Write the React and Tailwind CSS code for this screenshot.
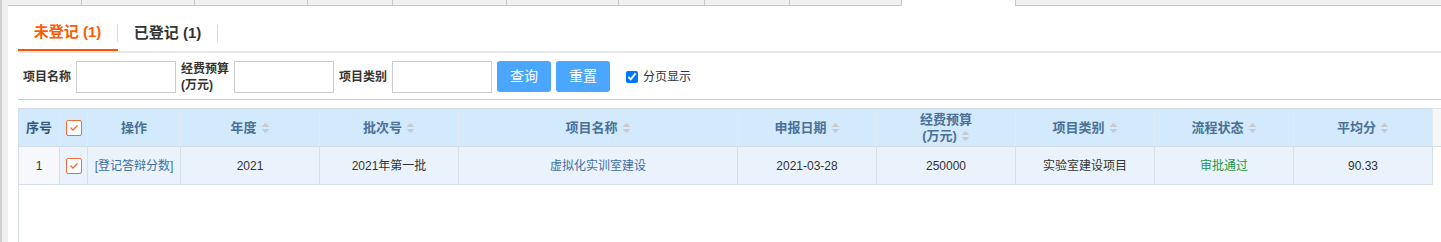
import React from "react";

const FONT = { fontFamily: '"Liberation Sans", "Noto Sans CJK SC", sans-serif' };

function Sort() {
  return (
    <svg width="9" height="12" viewBox="0 0 9 12" className="ml-[4px] shrink-0">
      <path d="M0.5 5 L4.5 1 L8.5 5 Z" fill="#c6cbd1" />
      <path d="M0.5 7 L4.5 11 L8.5 7 Z" fill="#c6cbd1" />
    </svg>
  );
}

function OrangeCheck() {
  return (
    <div className="w-[16px] h-[16px] border border-[#f26a3c] rounded-[2px] bg-white flex items-center justify-center">
      <svg width="10" height="8" viewBox="0 0 10 8">
        <path d="M1.5 3.5 L4 6 L8.5 1.5" fill="none" stroke="#f26a3c" strokeWidth="1.4" />
      </svg>
    </div>
  );
}

const cols = "grid-cols-[41px_28px_93px_139px_139px_279px_139px_139px_139px_139px_139px_133px_1fr]";

export default function App() {
  const topCells = [74, 113, 113, 85, 114, 112, 86, 85, 112];
  const head = [
    { t: "年度" },
    { t: "批次号" },
    { t: "项目名称" },
    { t: "申报日期" },
    { t: "经费预算", two: true },
    { t: "项目类别" },
    { t: "流程状态" },
    { t: "平均分" },
  ];
  return (
    <div className="flex w-[1441px] h-[242px] bg-white overflow-hidden text-[#333]" style={FONT}>
      <div className="w-[8px] h-full bg-[#f0f0f0] border-l-2 border-[#cfcfcf] shrink-0" />
      <div className="flex-1 flex flex-col min-w-0">
        {/* top tab strip */}
        <div className="flex h-[6px] shrink-0">
          {topCells.map((w, i) => (
            <div key={i} style={{ width: w }} className="h-full bg-[#f0f0f0] border-r border-b border-[#c8c8c8] shrink-0" />
          ))}
          <div className="w-[113px] h-full shrink-0" />
          <div className="flex-1 h-full bg-[#f0f0f0] border-l border-b border-[#c8c8c8]" />
        </div>

        <div className="pl-[10px] flex flex-col">
          {/* tabs */}
          <div className="mt-[10px] flex border-b-2 border-[#e8e8e8]">
            <div className="w-[100px] h-[35px] -mb-[2px] border-b-2 border-[#ff5400] flex items-center">
              <span className="flex-1 text-center text-[15px] font-bold text-[#ff5a00]">未登记 (1)</span>
              <div className="w-px h-[18px] bg-[#dedede]" />
            </div>
            <div className="w-[100px] h-[35px] flex items-center">
              <span className="flex-1 text-center text-[15px] font-bold text-[#333]">已登记 (1)</span>
              <div className="w-px h-[18px] bg-[#dedede]" />
            </div>
          </div>

          {/* filter row */}
          <div className="mt-[8px] flex items-center h-[31px] text-[12px]">
            <span className="ml-[5px] font-bold text-[#333]">项目名称</span>
            <div className="ml-[5px] w-[100px] h-[32px] border border-[#ccc] bg-white" />
            <span className="ml-[5px] font-bold text-[#333] leading-[16px] w-[48px]">经费预算<br />(万元)</span>
            <div className="ml-[5px] w-[100px] h-[32px] border border-[#ccc] bg-white" />
            <span className="ml-[5px] font-bold text-[#333]">项目类别</span>
            <div className="ml-[5px] w-[100px] h-[32px] border border-[#ccc] bg-white" />
            <button className="ml-[5px] w-[54px] h-[31px] rounded-[3px] bg-[#4aa6ff] text-white text-[14px]">查询</button>
            <button className="ml-[5px] w-[54px] h-[31px] rounded-[3px] bg-[#4aa6ff] text-white text-[14px]">重置</button>
            <input type="checkbox" defaultChecked className="ml-[16px] w-[12px] h-[12px] m-0" />
            <span className="ml-[5px] text-[12px] text-[#333]">分页显示</span>
          </div>
          <div className="mt-[7px] border-t border-[#cacaca]" />

          {/* table */}
          <div className="mt-[8px] border-l border-[#d6dfe8] h-[140px]">
            <div className={`grid ${cols} h-[39px] border-t border-b border-[#d6dfe8] text-[13px] font-bold text-[#4b7098]`}>
              <div className="bg-[#d2eafb] border-r border-[#e2ebf3] flex items-center justify-center text-[#35577a]">序号</div>
              <div className="bg-[#d2eafb] border-r border-[#e2ebf3] flex items-center justify-center"><OrangeCheck /></div>
              <div className="bg-[#d2eafb] border-r border-[#e2ebf3] flex items-center justify-center">操作</div>
              {head.map((h, i) =>
                h.two ? (
                  <div key={i} className="bg-[#d2eafb] border-r border-[#e2ebf3] flex flex-col items-center justify-center leading-[16px]">
                    <span>{h.t}</span>
                    <span className="flex items-center">(万元)<Sort /></span>
                  </div>
                ) : (
                  <div key={i} className="bg-[#d2eafb] border-r border-[#e2ebf3] flex items-center justify-center">
                    {h.t}
                    <Sort />
                  </div>
                )
              )}
              <div className="bg-[#f7f7f7]" />
            </div>
            <div className={`grid ${cols} h-[38px] text-[12px] text-[#333]`}>
              <div className="bg-[#f6f8fb] border-r border-b border-[#d6dfe8] flex items-center justify-center">1</div>
              <div className="bg-[#eaf3fc] border-r border-b border-[#d6dfe8] flex items-center justify-center"><OrangeCheck /></div>
              <div className="bg-[#eaf3fc] border-r border-b border-[#d6dfe8] flex items-center justify-center text-[#3f6ea3]">[登记答辩分数]</div>
              <div className="bg-[#eaf3fc] border-r border-b border-[#d6dfe8] flex items-center justify-center">2021</div>
              <div className="bg-[#eaf3fc] border-r border-b border-[#d6dfe8] flex items-center justify-center">2021年第一批</div>
              <div className="bg-[#eaf3fc] border-r border-b border-[#d6dfe8] flex items-center justify-center text-[#3f6ea3]">虚拟化实训室建设</div>
              <div className="bg-[#eaf3fc] border-r border-b border-[#d6dfe8] flex items-center justify-center">2021-03-28</div>
              <div className="bg-[#eaf3fc] border-r border-b border-[#d6dfe8] flex items-center justify-center">250000</div>
              <div className="bg-[#eaf3fc] border-r border-b border-[#d6dfe8] flex items-center justify-center">实验室建设项目</div>
              <div className="bg-[#eaf3fc] border-r border-b border-[#d6dfe8] flex items-center justify-center text-[#22994a]">审批通过</div>
              <div className="bg-[#eaf3fc] border-r border-b border-[#d6dfe8] flex items-center justify-center">90.33</div>
              <div className="bg-white" />
            </div>
          </div>
        </div>
      </div>
    </div>
  );
}
